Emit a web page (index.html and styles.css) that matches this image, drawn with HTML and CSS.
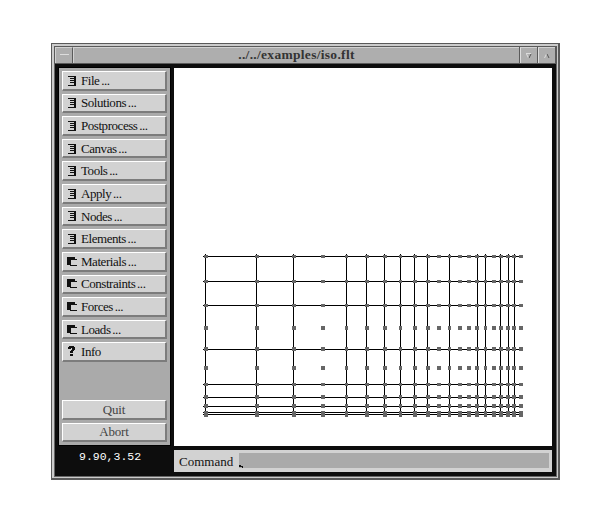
FILE: index.html
```
<!DOCTYPE html>
<html lang="en">
<head>
<meta charset="utf-8">
<title>../../examples/iso.flt</title>
<link rel="stylesheet" href="styles.css">
</head>
<body>
<svg width="0" height="0" class="defs" aria-hidden="true">
  <defs>
    <symbol id="menu" viewBox="0 0 10 12"><path fill="#111" d="M1 1h8v10H1v-1h6V2H1zM3 3h4v1H3zM3 5h4v1H3zM3 7h4v1H3z"/></symbol>
    <symbol id="panel" viewBox="0 0 10 12"><path fill="#111" d="M0 1h8v2h2v1H4v5H0zM3 9h7v1H3z"/></symbol>
    <symbol id="help" viewBox="0 0 10 12"><path fill="#111" d="M1 1h1V0h5v1h1v3H7v1H6v2H3V5h1V4h1V2H4v1H1zM3 8h3v2H3z"/></symbol>
    <path id="wide" d="M0 255h4v3H0zM0 280h4v3H0zM0 304h4v3H0zM0 326h4v4H0zM0 347h4v4H0zM0 366h4v4H0zM0 383h4v3H0zM0 395h4v4H0zM0 404h4v4H0zM0 411h4v6H0z"/>
    <path id="slim" d="M0 255h3v3H0zM0 280h3v3H0zM0 304h3v3H0zM0 326h3v4H0zM0 347h3v4H0zM0 366h3v4H0zM0 383h3v3H0zM0 395h3v4H0zM0 404h3v4H0zM0 411h3v6H0z"/>
  </defs>
</svg>
<div class="window">
  <header class="titlebar">
    <span class="tbtn"><i class="dash"></i></span>
    <h1 class="title"><span>../../examples/iso.flt</span></h1>
    <span class="tbtn narrow"><svg width="6" height="6"><path d="M0 .5h5M.5 1l2 4" stroke="#ddd" fill="none"/><path d="M5 1L3 5" stroke="#555"/></svg></span>
    <span class="tbtn narrow last"><svg width="6" height="6"><path d="M.5 5l2-4" stroke="#ddd"/><path d="M3 1l2 4" stroke="#555"/></svg></span>
  </header>
  <main class="client">
    <div class="left">
      <nav class="sidebar">
        <div class="menu">
          <button><svg><use href="#menu"/></svg><span>File ...</span></button>
          <button><svg><use href="#menu"/></svg><span>Solutions ...</span></button>
          <button><svg><use href="#menu"/></svg><span>Postprocess ...</span></button>
          <button><svg><use href="#menu"/></svg><span>Canvas ...</span></button>
          <button><svg><use href="#menu"/></svg><span>Tools ...</span></button>
          <button><svg><use href="#menu"/></svg><span>Apply ...</span></button>
          <button><svg><use href="#menu"/></svg><span>Nodes ...</span></button>
          <button><svg><use href="#menu"/></svg><span>Elements ...</span></button>
          <button><svg><use href="#panel"/></svg><span>Materials ...</span></button>
          <button><svg><use href="#panel"/></svg><span>Constraints ...</span></button>
          <button><svg><use href="#panel"/></svg><span>Forces ...</span></button>
          <button><svg><use href="#panel"/></svg><span>Loads ...</span></button>
          <button><svg><use href="#help"/></svg><span>Info</span></button>
        </div>
        <div class="actions">
          <button>Quit</button>
          <button>Abort</button>
        </div>
      </nav>
      <output class="coords">9.90,3.52</output>
    </div>
    <div class="right">
      <svg class="canvas" width="378" height="378" viewBox="174 68 378 378" shape-rendering="crispEdges">
        <path fill="#000" d="M203 256h318v1H203zM203 281h318v1H203zM203 305h318v1H203zM203 349h318v1H203zM203 384h318v1H203zM203 397h318v1H203zM203 406h318v1H203zM203 412h318v1H203zM203 414h318v1H203z"/>
        <path fill="#000" d="M205 254h1v162h-1zM256 254h1v162h-1zM293 254h1v162h-1zM346 254h1v162h-1zM366 254h1v162h-1zM384 254h1v162h-1zM400 254h1v162h-1zM414 254h1v162h-1zM427 254h1v162h-1zM449 254h1v162h-1zM477 254h1v162h-1zM485 254h1v162h-1zM500 254h1v162h-1zM508 254h1v162h-1zM514 254h1v162h-1z"/>
        <g fill="#666">
          <use href="#wide" x="204"/><use href="#wide" x="255"/><use href="#wide" x="292"/><use href="#wide" x="321"/>
          <use href="#slim" x="345"/><use href="#wide" x="365"/><use href="#wide" x="383"/><use href="#slim" x="399"/>
          <use href="#wide" x="413"/><use href="#wide" x="426"/><use href="#wide" x="437"/><use href="#slim" x="448"/>
          <use href="#wide" x="458"/><use href="#wide" x="467"/><use href="#wide" x="475"/><use href="#slim" x="484"/>
          <use href="#wide" x="492"/><use href="#wide" x="499"/><use href="#wide" x="506"/><use href="#wide" x="512"/>
          <use href="#wide" x="519"/>
        </g>
      </svg>
      <div class="command"><label>Command</label><div class="field"><svg width="4" height="3"><path fill="#111" d="M0 0h2v1h2v2H3V2H0z"/></svg></div></div>
    </div>
  </main>
</div>
</body>
</html>
```

FILE: styles.css
```
* { box-sizing: border-box; }
body { margin: 0; padding: 43px 0 0 51px; background: #fff; font: 13px/16px "Liberation Serif", serif; color: #111; }
.defs { display: block; }
.window { width: 509px; height: 437px; background: #ccc; border: solid #5a5a5a; border-width: 1px 2px 2px 1px; padding: 2px 1px 1px 2px; }
.titlebar { display: flex; height: 18px; border: 1px solid #5a5a5a; border-right-width: 2px; }
.tbtn, .title { background: #aeaeae; border: solid #d2d2d2; border-width: 1px 0 0 1px; }
.tbtn { width: 18px; flex: none; display: flex; align-items: center; justify-content: center; border-right: 1px solid #5a5a5a; }
.dash { width: 9px; height: 1px; background: #ddd; margin-top: -3px; }
.narrow { width: 17px; border-right: 0; border-left: 1px solid #ddd; box-shadow: -1px 0 #5a5a5a; margin-left: 1px; }
.title { flex: 1; margin: 0; font-size: 13.5px; line-height: 14px; font-weight: bold; text-align: center; color: #333; letter-spacing: .3px; }
.client { display: flex; height: 413px; background: #0d0d0d; padding: 4px; border: solid #666; border-width: 0 1px 1px; }
.left { width: 115px; flex: none; }
.sidebar { display: flex; flex-direction: column; justify-content: space-between; width: 111px; height: 377px; padding: 3px; background: #aaa; outline: 1px solid #000; }
.menu { display: grid; grid-template-rows: repeat(13, 1fr); row-gap: 3px; height: 291px; }
.actions { display: grid; grid-template-rows: 20px 19px; row-gap: 3px; }
button { display: flex; align-items: center; min-height: 0; width: 105px; margin: 0; padding: 1px 0 0 4px; font: inherit; font-size: 13px; letter-spacing: -.45px; word-spacing: -1px; color: #111; background: #d2d2d2; border: solid; border-width: 1px 2px 2px 1px; border-color: #fff #7c7c7c #7c7c7c #fff; }
button svg { width: 10px; height: 12px; flex: none; margin-right: 4px; shape-rendering: crispEdges; }
.actions button { justify-content: center; padding: 0; color: #444; font-size: 13px; letter-spacing: -.2px; }
.coords { display: block; margin: 5px 0 0 20px; color: #fff; font: 11.5px/14px "Liberation Mono", monospace; }
.right { width: 378px; flex: none; display: flex; flex-direction: column; gap: 4px; }
.canvas { display: block; background: #fff; }
.command { display: flex; height: 22px; padding: 3px 3px 4px 5px; background: #d2d2d2; }
.command label { width: 60px; line-height: 17px; }
.field { flex: 1; display: flex; align-items: flex-end; background: #aaa; }
```
